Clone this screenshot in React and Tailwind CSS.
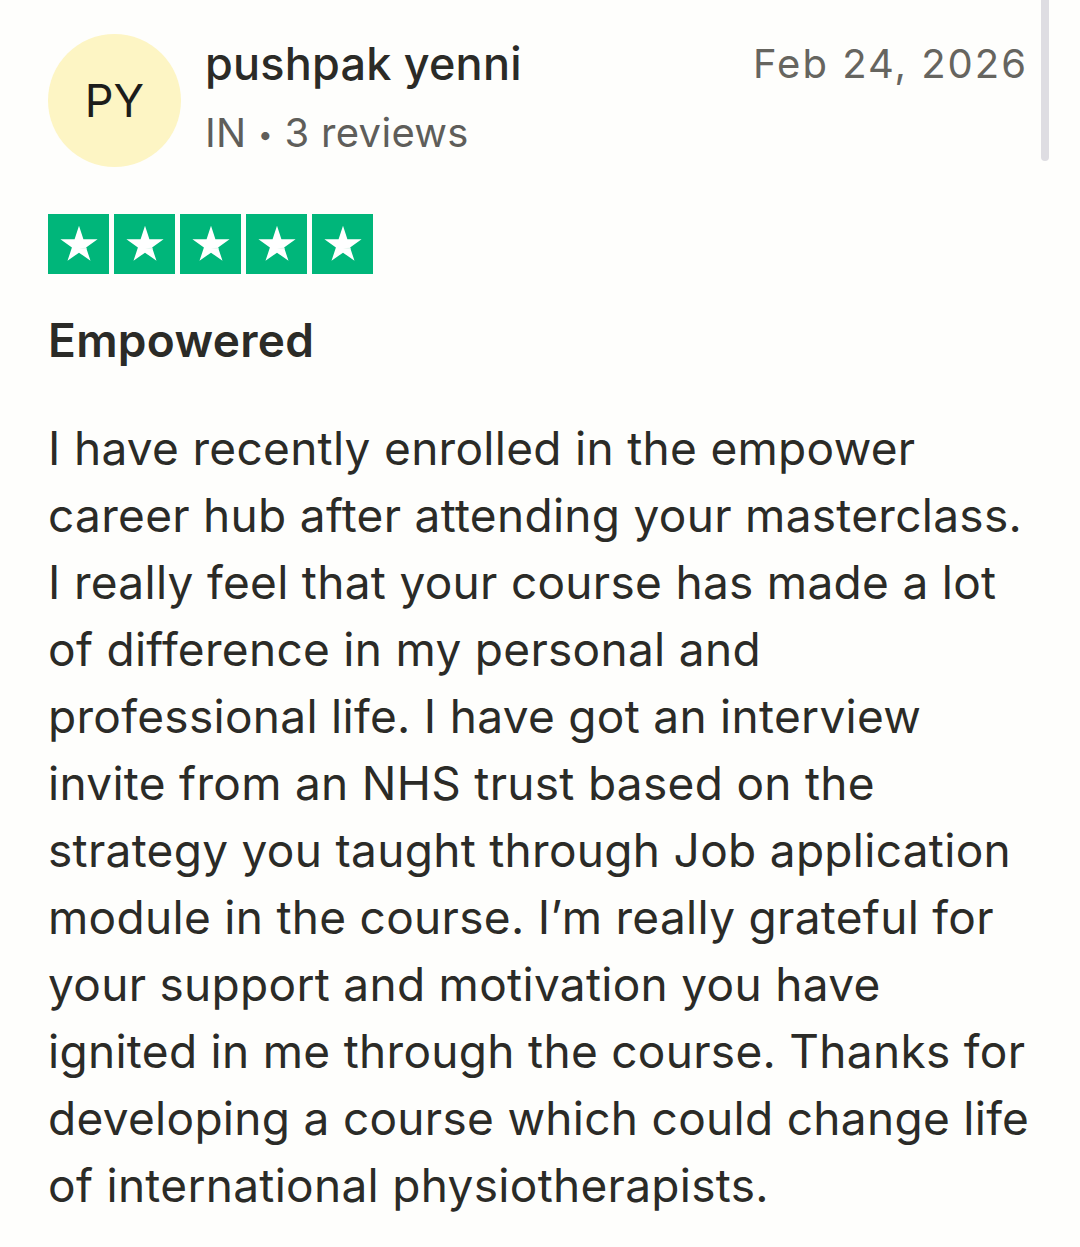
const lines = [
  'I have recently enrolled in the empower',
  'career hub after attending your masterclass.',
  'I really feel that your course has made a lot',
  'of difference in my personal and',
  'professional life. I have got an interview',
  'invite from an NHS trust based on the',
  'strategy you taught through Job application',
  'module in the course. I\u2019m really grateful for',
  'your support and motivation you have',
  'ignited in me through the course. Thanks for',
  'developing a course which could change life',
  'of international physiotherapists.',
];

function Star() {
  return (
    <div className="w-[61px] h-[60px] bg-[#00b67a] flex items-center justify-center">
      <svg width="46" height="46" viewBox="0 0 24 24">
        <path d="M12 2.5l2.3 7h7.4l-6 4.3 2.3 7L12 16.5l-6 4.3 2.3-7-6-4.3h7.4z" fill="#fff" />
        <path d="M15.7 13.8l0.3 0.9-4 -0.3z" fill="#e8f7f1" />
      </svg>
    </div>
  );
}

export default function App() {
  return (
    <div className="relative w-[1080px] h-[1247px] bg-[#fefefc] text-[#2b2b27] font-['Inter',sans-serif] overflow-hidden">
      {/* scrollbar thumb */}
      <div className="absolute right-[31px] top-0 w-[8px] h-[161px] rounded-b-full bg-[#dedde2]" />

      <div className="pl-[48px] pr-[52px] pt-[34px]">
        <div className="flex items-start">
          <div className="w-[133px] h-[133px] rounded-full bg-[#fdf5c4] flex items-center justify-center text-[45px] text-[#1c1c1a] shrink-0">
            PY
          </div>
          <div className="ml-[24px] flex-1">
            <div className="text-[45px] leading-[60px] font-medium tracking-[0.2px]">pushpak yenni</div>
            <div className="text-[40px] leading-[60px] text-[#5f5e5a] mt-[9px] tracking-[0.3px]">
              IN <span className="text-[26px] align-[3px]">•</span> 3 reviews
            </div>
          </div>
          <div className="text-[40px] leading-[60px] text-[#66655f] tracking-[2px]">Feb 24, 2026</div>
        </div>

        <div className="flex gap-[5px] mt-[47px]">
          <Star />
          <Star />
          <Star />
          <Star />
          <Star />
        </div>

        <div className="mt-[36px] text-[46px] leading-[60px] font-semibold tracking-[0.3px]">Empowered</div>

        <div className="mt-[45px] text-[46px] leading-[67px] tracking-[0.3px]">
          {lines.map((l, i) => (
            <div key={i} className="whitespace-nowrap">{l}</div>
          ))}
        </div>
      </div>
    </div>
  );
}
